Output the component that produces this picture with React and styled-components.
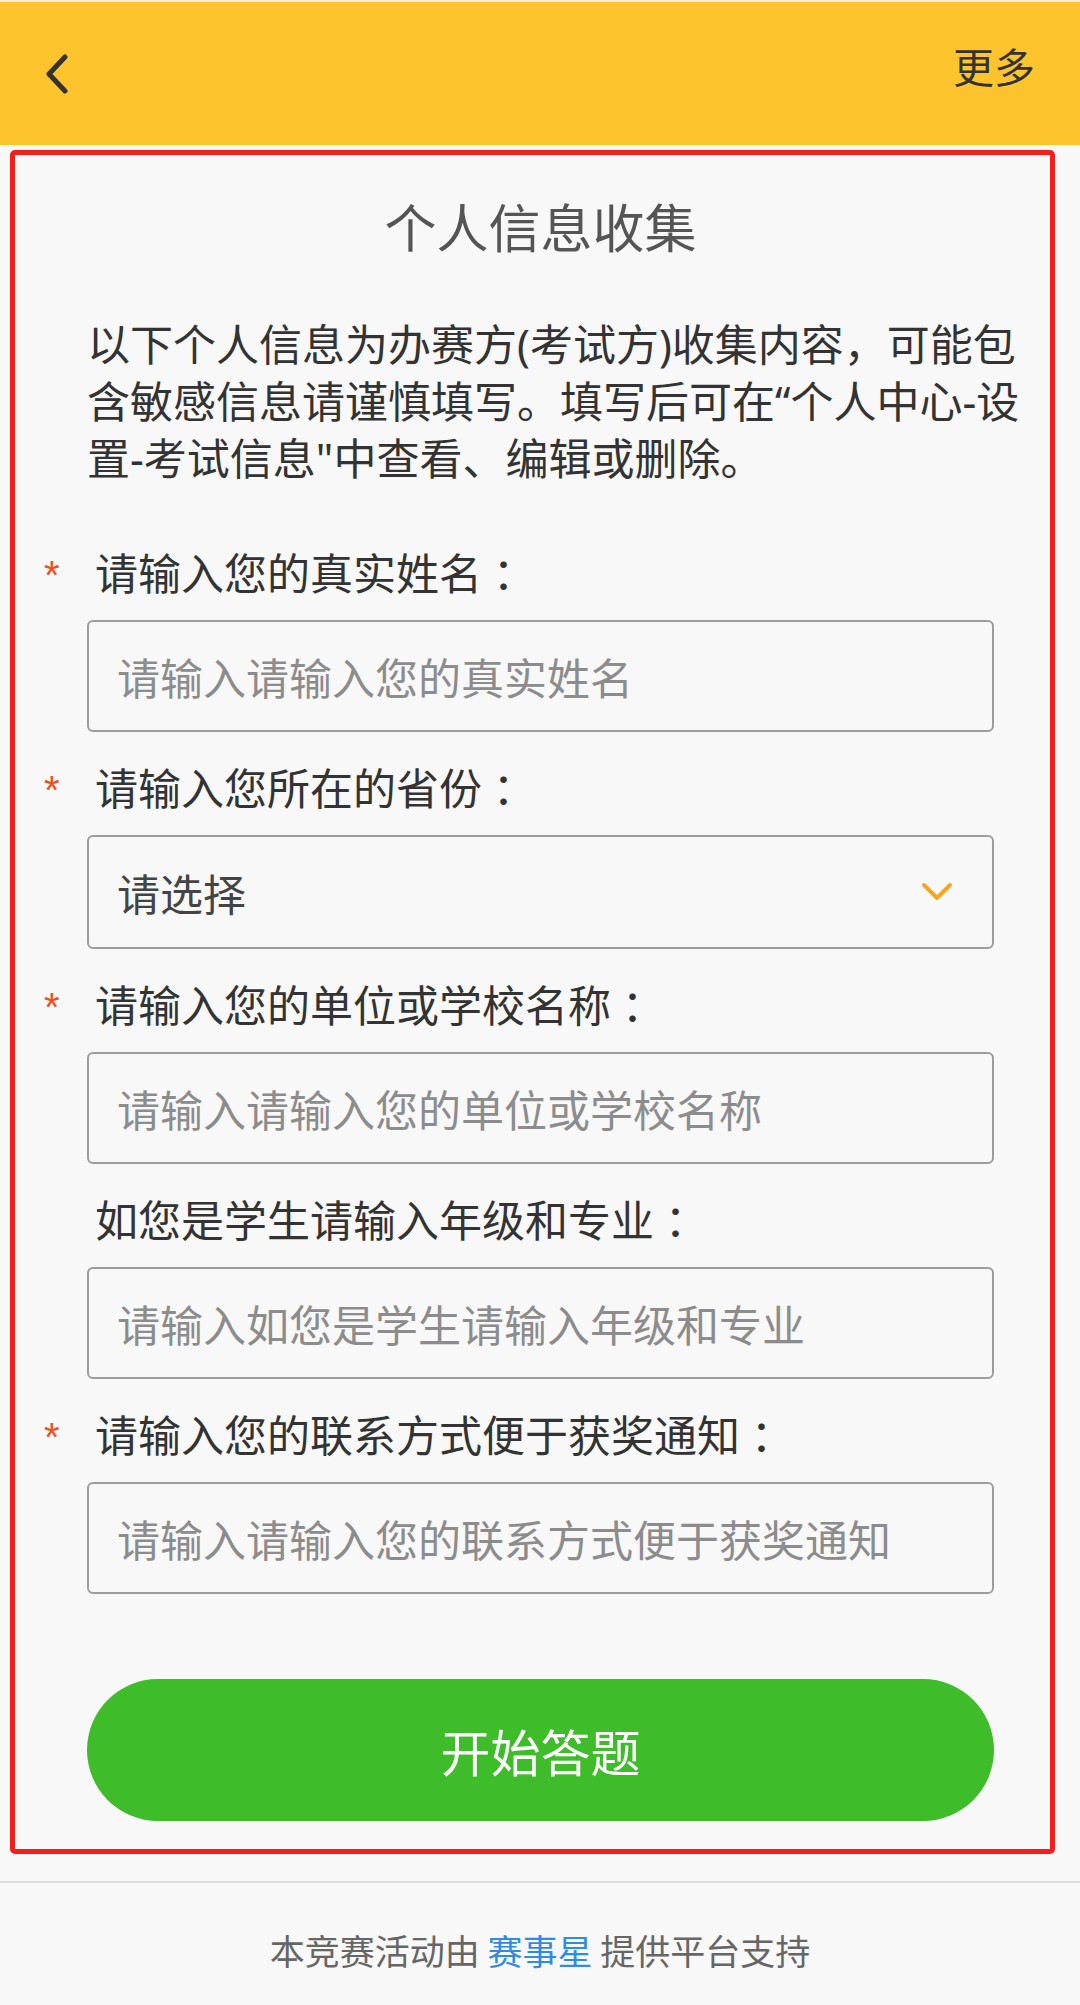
import { createGlobalStyle } from 'styled-components';
import styled from 'styled-components';

const GlobalStyle = createGlobalStyle`
  html, body {
    margin: 0;
    padding: 0;
    background: #f8f8f8;
  }
  body {
    font-family: "Noto Sans", "Noto Sans CJK SC", sans-serif;
    color: #333;
  }
  * {
    box-sizing: border-box;
  }
`;

const fields = [
  { label: '请输入您的真实姓名', placeholder: '请输入请输入您的真实姓名', required: true },
  { label: '请输入您所在的省份', select: '请选择', required: true },
  { label: '请输入您的单位或学校名称', placeholder: '请输入请输入您的单位或学校名称', required: true },
  { label: '如您是学生请输入年级和专业', placeholder: '请输入如您是学生请输入年级和专业', required: false },
  { label: '请输入您的联系方式便于获奖通知', placeholder: '请输入请输入您的联系方式便于获奖通知', required: true },
];

function BackIcon() {
  return (
    <svg width="24" height="40" viewBox="0 0 24 40" fill="none">
      <path d="M20 3 L4 20 L20 37" stroke="#333" strokeWidth="5" strokeLinecap="round" strokeLinejoin="round" />
    </svg>
  );
}

function DownIcon() {
  return (
    <svg width="32" height="20" viewBox="0 0 32 20" fill="none">
      <path d="M3 3 L16 16 L29 3" stroke="#f5a623" strokeWidth="4" strokeLinecap="round" strokeLinejoin="round" />
    </svg>
  );
}

function App() {
  return (
    <Page>
      <GlobalStyle />
      <Header>
        <BackButton>
          <BackIcon />
        </BackButton>
        <More>更多</More>
      </Header>

      <Card>
        <Title>个人信息收集</Title>
        <Notice>
          以下个人信息为办赛方(考试方)收集内容，可能包含敏感信息请谨慎填写。填写后可在“个人中心-设置-考试信息"中查看、编辑或删除。
        </Notice>

        <Form>
          {fields.map((f) => (
            <Field key={f.label}>
              <Label>
                <Star>{f.required ? '*' : ''}</Star>
                <span>{f.label}</span>
                <Colon>：</Colon>
              </Label>
              {f.select ? (
                <SelectBox>
                  <span>{f.select}</span>
                  <DownIcon />
                </SelectBox>
              ) : (
                <Input type="text" placeholder={f.placeholder} />
              )}
            </Field>
          ))}
        </Form>

        <StartButton>开始答题</StartButton>
      </Card>

      <Footer>
        本竞赛活动由 <Brand>赛事星</Brand> 提供平台支持
      </Footer>
    </Page>
  );
}

export default App;

const Page = styled.div`
  width: 1080px;
  min-height: 2005px;
  background: #f8f8f8;
  border-top: 2px solid #f7eedb;
`;

const Header = styled.div`
  height: 143px;
  background: #fec42e;
  display: flex;
  justify-content: space-between;
  align-items: flex-start;
  padding: 0 45px;
`;

const BackButton = styled.div`
  margin-top: 52px;
  width: 24px;
  height: 40px;
  display: flex;
`;

const More = styled.div`
  margin-top: 37px;
  font-family: "Noto Sans CJK SC", sans-serif;
  font-size: 41px;
  line-height: 52px;
  color: #333;
`;

const Card = styled.div`
  margin: 5px 25px 0 10px;
  border: 5px solid #f41f1a;
  border-radius: 5px;
  padding: 36px 56px 28px 72px;
`;

const Title = styled.h1`
  margin: 0;
  font-family: "Noto Sans CJK SC", sans-serif;
  font-size: 52px;
  line-height: 70px;
  font-weight: 400;
  color: #555;
  text-align: center;
`;

const Notice = styled.p`
  margin: 55px -51px 0 0;
  font-size: 43px;
  line-height: 57px;
  color: #333;
`;

const Form = styled.div`
  margin-top: 58px;
  display: flex;
  flex-direction: column;
  gap: 28px;
`;

const Field = styled.div`
  display: flex;
  flex-direction: column;
  gap: 18px;
`;

const Label = styled.div`
  display: flex;
  align-items: center;
  margin-left: -43px;
  font-size: 43px;
  line-height: 57px;
  color: #333;
`;

const Star = styled.span`
  width: 51px;
  flex-shrink: 0;
  font-family: "Liberation Sans", sans-serif;
  color: #e8541e;
  font-size: 40px;
  position: relative;
  top: 2px;
`;

const Colon = styled.span`
  font-family: "Noto Sans CJK TC", sans-serif;
`;

const Input = styled.input`
  display: block;
  width: 907px;
  height: 112px;
  border: 2px solid #9d9d9d;
  border-radius: 6px;
  background: transparent;
  padding: 0 28px;
  font-family: "Noto Sans CJK SC", sans-serif;
  font-size: 43px;
  color: #333;
  outline: none;

  &::placeholder {
    color: #8c8c8c;
  }
`;

const SelectBox = styled.div`
  width: 907px;
  height: 114px;
  border: 2px solid #9d9d9d;
  border-radius: 6px;
  padding: 0 39px 0 28px;
  display: flex;
  align-items: center;
  justify-content: space-between;
  font-family: "Noto Sans CJK SC", sans-serif;
  font-size: 43px;
  color: #444;
`;

const StartButton = styled.button`
  display: block;
  margin-top: 85px;
  width: 907px;
  height: 142px;
  border: none;
  border-radius: 71px;
  background: #3ebc29;
  color: #fff;
  font-family: "Noto Sans CJK SC", sans-serif;
  font-size: 50px;
  cursor: pointer;
`;

const Footer = styled.div`
  margin-top: 27px;
  border-top: 2px solid #dedede;
  padding-top: 42px;
  text-align: center;
  font-family: "Noto Sans CJK SC", sans-serif;
  font-size: 35px;
  line-height: 50px;
  color: #666;
`;

const Brand = styled.span`
  color: #2e8be6;
`;
